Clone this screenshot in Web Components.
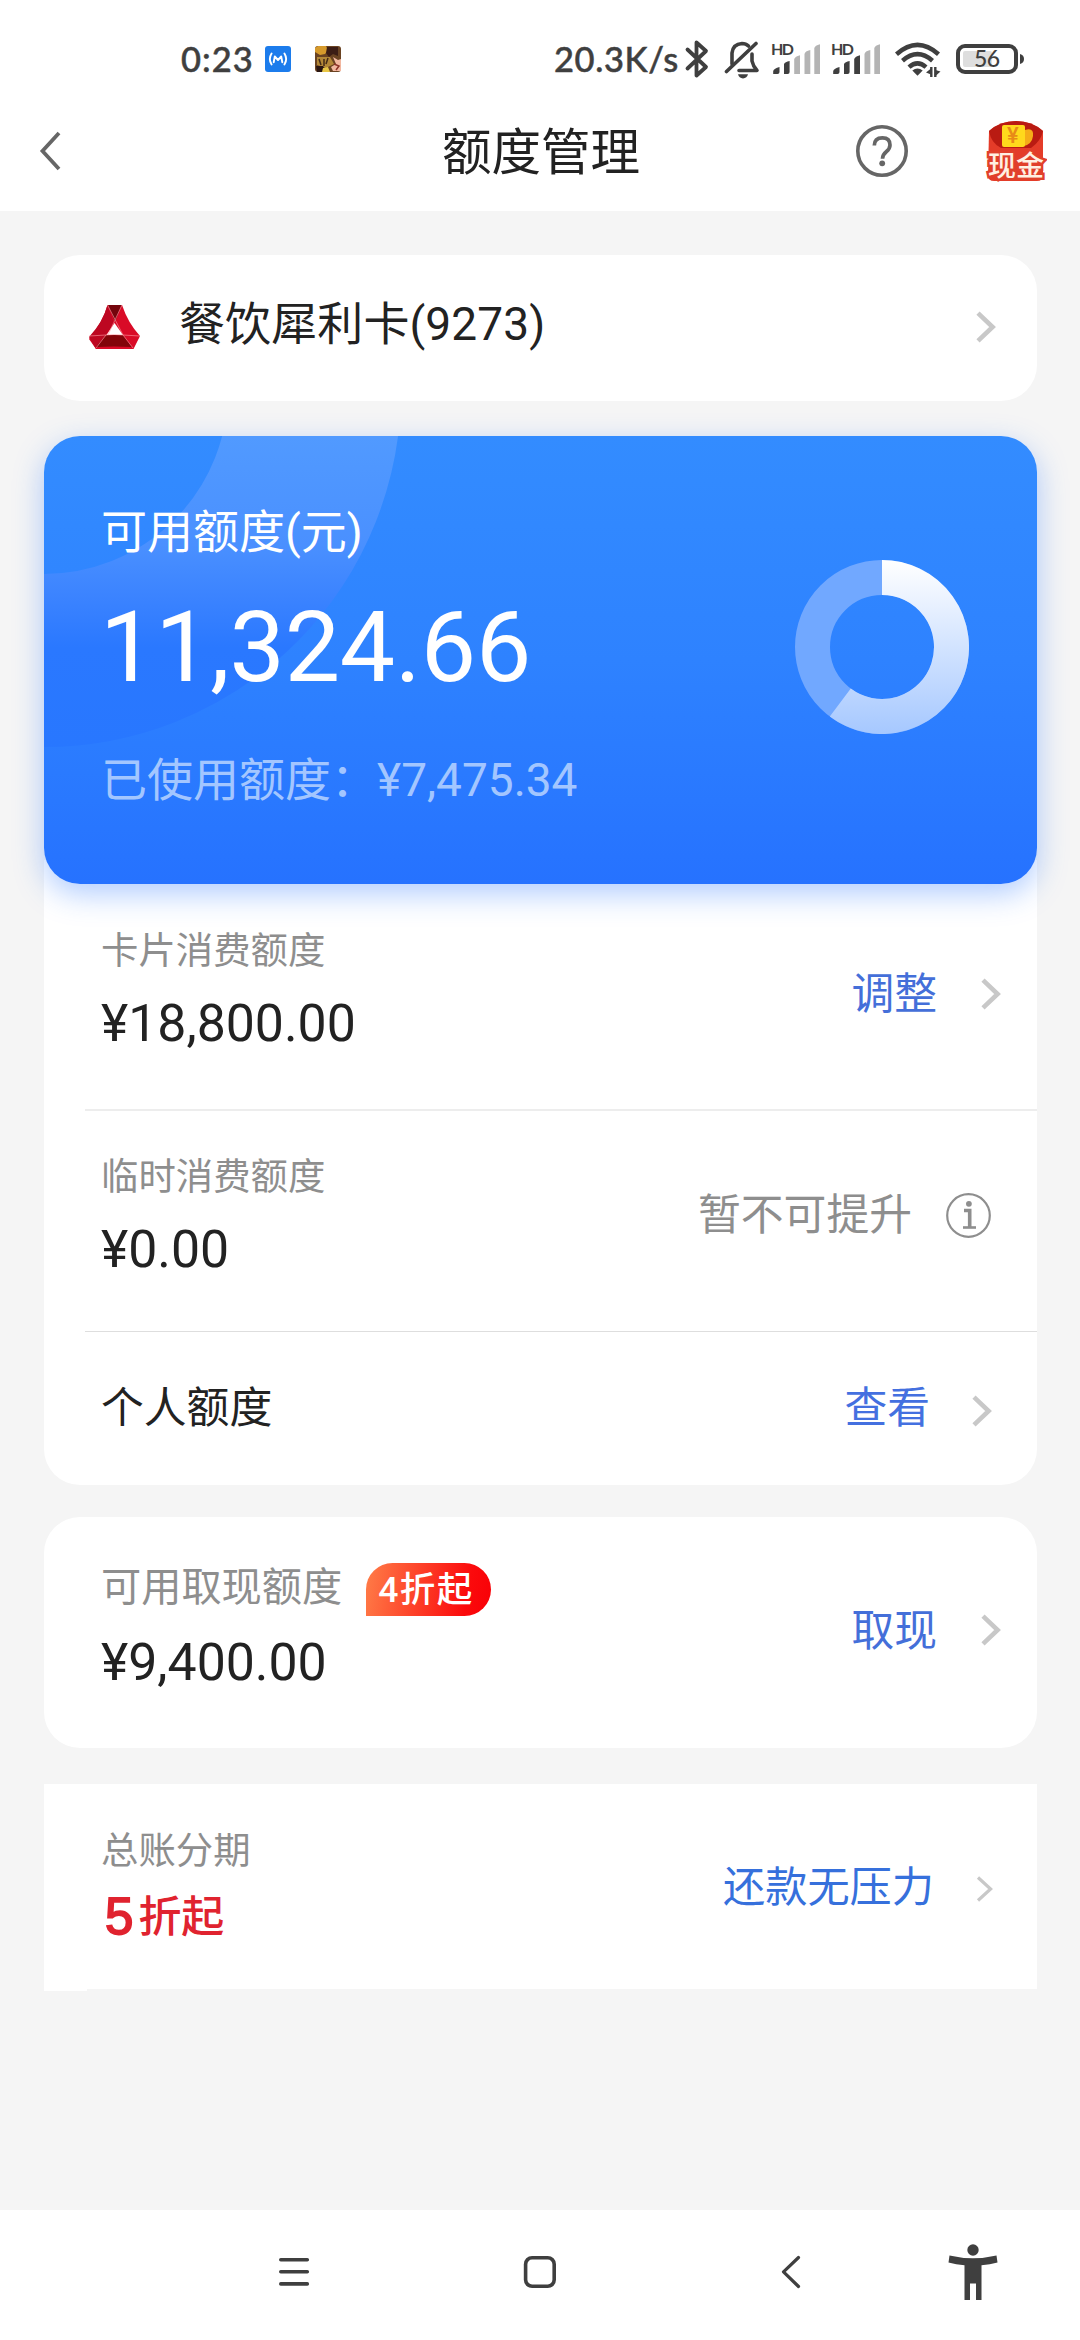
<!DOCTYPE html>
<html lang="zh-CN">
<head>
<meta charset="utf-8">
<title>额度管理</title>
<style>
html,body{margin:0;padding:0}
body{width:1080px;height:2340px;overflow:hidden;background:#f5f5f5;color:#222;font-family:Roboto,"Noto Sans CJK SC",sans-serif}
</style>
</head>
<body>
<quota-app></quota-app>
<script>
const define=(name,html)=>{
  const t=document.createElement('template');
  t.innerHTML=html;
  customElements.define(name,class extends HTMLElement{
    constructor(){super();this.attachShadow({mode:'open'}).append(t.content.cloneNode(true));}
  });
};

define('chevron-icon',`
<style>:host{display:block;flex:none;width:20px;height:32px;color:#c8c8c8;margin-top:var(--chev-dy,0)}svg{display:block}
:host([thin]) .n{display:none}:host(:not([thin])) .t{display:none}</style>
<svg width="20" height="32" viewBox="0 0 20 32" fill="none" stroke="currentColor">
<path class="n" d="M2 2.2 16.6 16 2 29.8" stroke-width="4.6"/><path class="t" d="M2 4.5 14.6 16 2 27.5" stroke-width="3.2"/></svg>`);

define('signal-bars',`
<style>:host{display:block;flex:none;width:50px;height:40px;--third:#b4b4b4}:host([three]){--third:#3f3f3f}svg{display:block}
text{font:700 16px Lato,sans-serif;fill:#3f3f3f}</style>
<svg width="50" height="40" viewBox="0 -6 50 40"><text x="0" y="12.8" textLength="23">HD</text>
<g fill="#3f3f3f"><path d="M2.2 32V29Q3 26.5 8.5 25V30q0 2-2 2z"/><path d="M13 32V22Q14 20 18.6 19V30q0 2-2 2z"/></g>
<path fill="var(--third)" d="M23.2 32V17Q24 14.5 29 13.2V32z"/>
<path fill="#b4b4b4" d="M33.5 32V12Q34 9 39.3 8V32zM43.3 32V6Q44 3.5 49 2.2V32z"/></svg>`);

define('status-bar',`
<style>:host{display:flex;height:90px;box-sizing:border-box;padding:34px 0 0 181px;background:#fff;align-items:flex-start;color:#3f3f3f}
svg{display:block;flex:none}
.t{font:500 34.5px/50px Lato,"Noto Sans",sans-serif;white-space:nowrap;-webkit-text-stroke:.5px #3f3f3f}
.clock{width:84px;letter-spacing:1px}.speed{width:130px;margin-left:213px;letter-spacing:.6px}
.a{margin:12px 24px 0 0}.b{margin-top:12px}
.bt{margin-top:5px}.bell{margin:6px 0 0 14px}.s1{margin:2px 0 0 11px}.s2{margin:2px 0 0 10px}.wifi{margin:7px 0 0 13px}.bat{margin:9px 0 0 14px}
.pct{font:500 23px Lato,"Noto Sans",sans-serif;fill:#3f3f3f}</style>
<span class="t clock">0:23</span>
<svg class="a" width="26" height="26" viewBox="0 0 26 26"><rect width="26" height="26" rx="3" fill="#1c7cec"/><g fill="none" stroke="#fff" stroke-width="1.9" stroke-linecap="round" stroke-linejoin="round"><path d="M6.6 7.5q-3.5 5.4 0 11M19.4 7.5q3.5 5.4 0 11"/><path d="M8.7 16.3l1.1-5.8 3.2 3.5 3.2-3.5 1.1 5.8"/></g></svg>
<svg class="b" width="26" height="26" viewBox="0 0 26 26"><rect width="26" height="26" rx="3" fill="#6a4322"/><path d="M3 0h8l2 4-3 4-5 1-5-3V2z" fill="#d69a2c"/><path d="M12 1h11v9l-5-2-4 3-3-4z" fill="#3b1d15"/><path d="M2 11h13l4 7-8 4-9-3z" fill="#b38737"/><path d="M4 13l2 6M9 13v7M13 12l-2 6" stroke="#442b18" stroke-width="1.5"/><path d="M18 11l5 3 3-1v12h-8l-2-4 5-3z" fill="#f2b7a0"/><path d="M1 20h7l3 4-2 2H2z" fill="#2a1612"/><path d="M8 22l5-1 2 5H7z" fill="#e8c646"/><path d="M19 18l5 2-3 4" stroke="#8d3328" stroke-width="1.5" fill="none"/></svg>
<span class="t speed">20.3K/s</span>
<svg class="bt" width="26" height="40" viewBox="0 0 26 40" fill="none" stroke="#3f3f3f" stroke-width="3.8" stroke-linejoin="round" stroke-linecap="round"><path d="M3.5 10.5 22 28 12.5 36.5V3.5L22 12 3.5 29.5"/></svg>
<svg class="bell" width="36" height="40" viewBox="0 0 36 40" fill="none" stroke="#3f3f3f" stroke-width="3.6" stroke-linecap="round" stroke-linejoin="round"><path d="M2.5 31.5 32 3.5"/><path d="M8 24V13Q9 4 18 3.5q4 0 6.5 2.5M28 14v7q1 5 5 9.5H15"/><path d="M14 34.2h10q-1 4-5 4.2-4-.2-5-4.2z" fill="#3f3f3f" stroke="none"/></svg>
<signal-bars class="s1"></signal-bars><signal-bars class="s2" three></signal-bars>
<svg class="wifi" width="48" height="38" viewBox="0 0 48 38" fill="none" stroke="#3f3f3f" stroke-width="4.5"><path d="M2.5 13.2Q23.5-5.5 44.5 13.2"/><path d="M8.5 19.7Q23.5 6.5 38.5 19.7"/><path d="M15 26.1Q23.5 18.5 32 26.1"/><path d="M18.3 29.5q5.2-4 10.4 0L23.5 34.7z" fill="#3f3f3f" stroke="none"/><path d="M37.3 26v10M41.3 26v10" stroke-width="2.4"/><path d="M32 31.5l5-4v6zM46.5 30.5l-5 4.5v-6z" fill="#3f3f3f" stroke="none"/></svg>
<svg class="bat" width="70" height="32" viewBox="0 0 70 32"><rect x="7" y="8" width="29" height="16" rx="2" fill="#dedede"/><rect x="2" y="3" width="58" height="26" rx="7" fill="none" stroke="#3f3f3f" stroke-width="4"/><path d="M64 11q4 1 4 5t-4 5z" fill="#3f3f3f"/><text class="pct" x="18" y="24.2" textLength="26">56</text></svg>`);

define('page-header',`
<style>:host{display:grid;grid-template-columns:442px 196px 1fr;height:121px;background:#fff;align-items:center}
svg{display:block}.back{margin-left:39px}
h1{margin:5px 0 0;font-size:49.500px;font-weight:400;line-height:60px;white-space:nowrap;color:#222}
.tools{display:flex;align-items:center;padding-left:218px}.cash{margin-left:77px}
.q{margin-top:1px}.w{font:500 28px "Noto Sans CJK SC",sans-serif;paint-order:stroke;stroke:#e1402b;stroke-width:5px;fill:#fff0e2}
.y{font:500 22px Roboto,sans-serif;fill:#e88a17}</style>
<svg class="back" width="22" height="40" viewBox="0 0 22 40" fill="none" stroke="#666" stroke-width="3.8"><path d="M20 2 3.5 20 20 38"/></svg>
<h1><slot></slot></h1>
<div class="tools">
<svg class="q" width="52" height="52" viewBox="0 0 52 52" fill="none" stroke="#666"><circle cx="26" cy="26" r="24.2" stroke-width="3.6"/><path d="M18.3 20.6q0-7.8 8.1-7.8 7.6 0 7.6 7.2 0 3.6-3.5 6.5-4 3.3-4 7.2" stroke-width="3.7"/><circle cx="26.2" cy="38.3" r="2.9" fill="#666" stroke="none"/></svg>
<svg class="cash" width="62" height="64" viewBox="0 0 62 64"><path d="M4 12Q15 2 31 2t27 10v44q0 6-6 6H9q-6 0-6-6z" fill="#e43c29"/><path d="M4 12Q15 2 31 2t27 10q-2 10-12 17H16Q6 24 4 12z" fill="#b91b12"/><path d="M40 11q9-3 8 6-1 8-9 10z" fill="#f5ad18"/><rect x="17" y="6" width="23" height="22" rx="2" fill="#ffd91c"/><text class="y" x="22" y="24">¥</text><text class="w" x="3" y="56.500">现金</text></svg>
</div>`);

define('card-picker',`
<style>:host{display:flex;align-items:center;height:146px;background:#fff;border-radius:36px;padding:0 41px 0 44px;--chev-dy:-3px}
svg{display:block;margin-right:38px;margin-top:-5px}.n{flex:1;font-size:46px;line-height:60px;margin-top:-9px;white-space:nowrap;letter-spacing:.1px}</style>
<svg width="53" height="46" viewBox="0 0 53 46"><path d="M19.500 2H34Q40 20 52 33L45.500 46H8L1 36Q15 19 19.500 2z" fill="#d90b27"/><path d="M19.500 2 Q15 19 1 34l7 12 18-26z" fill="#bd0721"/><path d="M20 2h13.500L27 19z" fill="#74050c"/><path d="M18 32h17l9 12Q26 43 8 44z" fill="#820409"/><path d="M26.500 20 18.500 32H35z" fill="#fff"/><path d="M34 2 20 32M19.500 2 35 32M1 33Q26 30 52 33M18 32 8 45M35 32 45 45" fill="none" stroke="#ff9ca4" stroke-width=".6"/></svg>
<div class="n"><slot></slot></div><chevron-icon></chevron-icon>`);

define('usage-ring',`
<style>:host{display:block;width:174px;height:174px}svg{display:block}</style>
<svg width="174" height="174" viewBox="-87 -87 174 174"><defs><linearGradient id="g" gradientUnits="userSpaceOnUse" x1="0" y1="-87" x2="0" y2="87"><stop offset="0" stop-color="#fff"/><stop offset="1" stop-color="#a6c8ff"/></linearGradient></defs>
<circle r="69.500" fill="none" stroke="#71a8ff" stroke-width="35"/><path d="M0-69.500A69.500 69.500 0 1 1-41.700 55.600" fill="none" stroke="url(#g)" stroke-width="35"/></svg>`);

define('available-card',`
<style>:host{display:grid;grid-template:100% / 100%;height:448px;border-radius:36px;overflow:hidden;background:linear-gradient(#338cff,#2e82ff 50%,#2672ff);box-shadow:0 10px 30px rgba(40,116,255,.36);position:relative;z-index:1;color:#fff}
.bg,.body{grid-area:1/1}.bg{display:block}
.body{display:flex;justify-content:space-between;padding:64px 68px 0 57px}
.cap,.used{font-size:46px;line-height:64px;white-space:nowrap}.amt{font-size:98.500px;line-height:110px;margin:29px 0 45px -1px;letter-spacing:-.2px}.used{color:#a3c6ff}
usage-ring{margin-top:60px}</style>
<svg class="bg" width="993" height="448" viewBox="0 0 993 448"><defs><linearGradient id="b" gradientUnits="userSpaceOnUse" x1="0" y1="0" x2="0" y2="311"><stop offset="0" stop-color="#519aff"/><stop offset=".35" stop-color="#4a90ff"/><stop offset=".52" stop-color="#3b83ff"/><stop offset=".68" stop-color="#2a78ff"/><stop offset="1" stop-color="#2877ff"/></linearGradient></defs><circle cx="0" cy="-46" r="270.500" fill="none" stroke="url(#b)" stroke-width="173"/></svg>
<div class="body"><div><div class="cap"><slot name="caption"></slot></div><div class="amt"><slot name="amount"></slot></div><div class="used"><slot name="used"></slot></div></div><usage-ring></usage-ring></div>`);

define('limit-row',`
<style>:host{display:flex;justify-content:space-between;align-items:flex-start;box-sizing:border-box;height:var(--h);padding-left:57px}
.l{padding-top:var(--lt)}.label{display:flex;font-size:var(--ls,37.400px);line-height:50px;color:#8e8e8e;white-space:nowrap}
.value{font-size:51.800px;line-height:60px;margin-top:var(--gap,18px);color:#222}
.r{display:flex;align-items:center;padding-top:var(--rt);padding-right:var(--rr,36px);gap:var(--rg,44px);font-size:var(--rs,42.800px);line-height:60px;color:var(--c,#446fd9);white-space:nowrap}</style>
<div class="l"><div class="label"><slot name="label"></slot></div><div class="value"><slot name="value"></slot></div></div>
<div class="r"><slot name="action"></slot><slot name="icon"><chevron-icon></chevron-icon></slot></div>`);

define('panel-box',`
<style>:host{display:block;background:#fff;border-radius:36px;overflow:hidden}:host([joined]){margin-top:-24px;padding-top:24px;border-radius:0 0 36px 36px}:host([square]){border-radius:0}</style><slot></slot>`);

define('row-divider',`<style>:host{display:block;height:2px;margin-left:41px;background:var(--line,#ededed)}:host([fine]){height:1px;background:#dedede}</style>`);

define('info-icon',`
<style>:host{display:block;margin-left:-10px}svg{display:block}</style>
<svg width="45" height="45" viewBox="0 0 45 45" fill="none" stroke="#8e8e8e"><circle cx="22.500" cy="22.500" r="21.300" stroke-width="2.200"/><circle cx="22.900" cy="10.800" r="2.900" fill="#8e8e8e" stroke="none"/><path d="M18 17.500h5.700V34" stroke-width="3.600"/><path d="M17 34.500h13" stroke-width="2.600"/></svg>`);

define('discount-badge',`
<style>:host{display:block;box-sizing:border-box;width:125px;height:53px;margin:0 0 0 24px;padding-left:12px;border-radius:27px 27px 27px 0;background:linear-gradient(100deg,#ff7d48,#fb0a0c 80%,#f80006);color:#fff;font:500 35.500px/54px Roboto,"Noto Sans CJK SC",sans-serif;letter-spacing:1.500px}</style><slot></slot>`);

define('system-nav',`
<style>:host{display:flex;height:130px;background:#fff;box-sizing:border-box;padding:32px 0 0 278px}svg{display:block}.h{margin-left:212px}.b{margin-left:222px}.p{margin-left:144px}</style>
<svg width="32" height="60" viewBox="0 0 32 60" stroke="#3f3f3f" stroke-width="3.600" stroke-linecap="round"><path d="M2.800 17.700H29.300M2.800 29.700H29.300M2.800 41.900H29.300"/></svg>
<svg class="h" width="36" height="60" viewBox="0 0 36 60"><rect x="3.600" y="15.700" width="28.600" height="28.600" rx="6.500" fill="none" stroke="#3f3f3f" stroke-width="3.600"/></svg>
<svg class="b" width="22" height="60" viewBox="0 0 22 60" fill="none" stroke="#3f3f3f" stroke-width="3.200" stroke-linecap="round" stroke-linejoin="round"><path d="M18.500 15.500 3.500 29.800 18.500 44.500"/></svg>
<svg class="p" width="54" height="60" viewBox="0 0 54 60" fill="#3f3f3f"><circle cx="27" cy="8" r="5.700"/><path d="M3.500 13.500Q27 19 50.500 13.500L51.500 20.500Q44 22.800 35.500 23.300V58H30V41.500H24V58H18.500V23.300Q10 22.800 2.500 20.500z"/></svg>`);

define('quota-app',`
<style>:host{display:flex;flex-direction:column;width:1080px;height:2340px}
main{flex:1;padding:44px 43px 0 44px}
available-card{margin-top:35px}
.cashp{margin-top:32px}.inst{margin-top:36px}
.r1{--h:225px;--lt:42px;--rt:80px}.r2{--h:220px;--lt:41px;--rt:74px;--rr:46px;--c:#8e8e8e}
.r3{--h:153px;--lt:51px;--rt:46px;--rr:45px;--rg:42px;--c:#4470e0;--chev-dy:6px}
.r4{--h:231px;--lt:46px;--ls:40.200px;--gap:17px;--rt:84px;--chev-dy:-3px}
.r5{--h:205px;--lt:42px;--gap:11px;--rt:74px;--rr:41px;--rs:42.200px;--rg:42px;--c:#3670dc;--chev-dy:2px}
.inst row-divider{--line:#f5f5f5;margin-left:43px}
.strong{color:#222;font-size:42.800px}
.red{display:flex;gap:5px;padding-left:4px;color:#e0232f;font-size:43px;font-weight:500}
.red b{font:400 51px/60px "Liberation Sans",sans-serif;-webkit-text-stroke:1.800px #e0232f}
</style>
<status-bar></status-bar><page-header>额度管理</page-header>
<main>
<card-picker>餐饮犀利卡(9273)</card-picker>
<available-card><span slot="caption">可用额度(元)</span><span slot="amount">11,324.66</span><span slot="used">已使用额度：¥7,475.34</span></available-card>
<panel-box joined>
<limit-row class="r1"><span slot="label">卡片消费额度</span><span slot="value">¥18,800.00</span><span slot="action">调整</span></limit-row>
<row-divider></row-divider>
<limit-row class="r2"><span slot="label">临时消费额度</span><span slot="value">¥0.00</span><span slot="action">暂不可提升</span><info-icon slot="icon"></info-icon></limit-row>
<row-divider fine></row-divider>
<limit-row class="r3"><span slot="label" class="strong">个人额度</span><span slot="action">查看</span></limit-row>
</panel-box>
<panel-box class="cashp"><limit-row class="r4"><span slot="label">可用取现额度</span><discount-badge slot="label">4折起</discount-badge><span slot="value">¥9,400.00</span><span slot="action">取现</span></limit-row></panel-box>
<panel-box class="inst" square><limit-row class="r5"><span slot="label">总账分期</span><span slot="value" class="red"><b>5</b><span>折起</span></span><span slot="action">还款无压力</span><chevron-icon thin slot="icon"></chevron-icon></limit-row><row-divider></row-divider></panel-box>
</main>
<system-nav></system-nav>`);
</script>
</body>
</html>
